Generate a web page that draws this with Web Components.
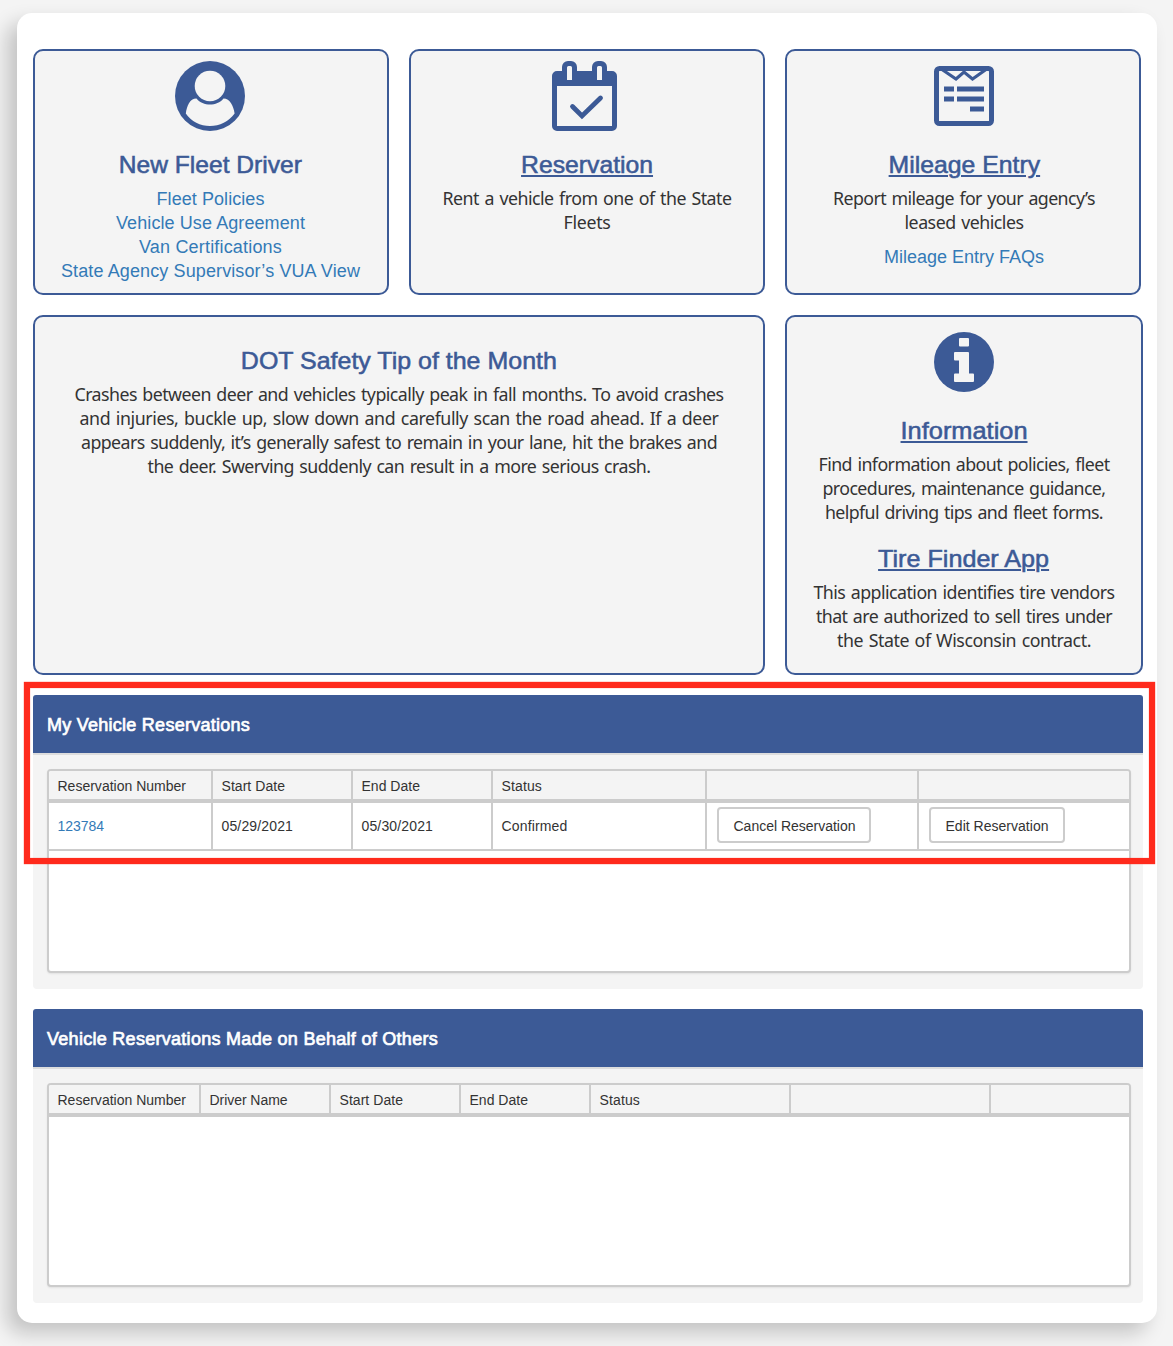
<!DOCTYPE html>
<html lang="en">
<head>
<meta charset="utf-8">
<title>Fleet Driver Portal</title>
<style>
html{background:#f4f4f4}
body{margin:0;padding:13px 16px 23px 17px;font-family:"Liberation Sans",sans-serif;color:#333}
</style>
</head>
<body>
<portal-page></portal-page>
<script>
const define = (name, html, setup) => {
  const t = document.createElement('template');
  t.innerHTML = html;
  customElements.define(name, class extends HTMLElement {
    connectedCallback() {
      if (this.shadowRoot) return;
      this.attachShadow({mode: 'open'}).append(t.content.cloneNode(true));
      if (setup) setup(this, this.shadowRoot);
    }
  });
};

/* One line of text that fills the given measure: tracked, or widened inside a card title. */
define('text-line', `<style>
:host{display:block;white-space:nowrap}
span{display:inline-block;text-decoration:var(--line,none);text-decoration-thickness:2px;text-underline-offset:2px}
</style><span><slot></slot></span>`, (el, root) => {
  const s = root.querySelector('span');
  const w = +el.getAttribute('w');
  const n = el.textContent.length;
  if (!w) return;
  const natural = s.getBoundingClientRect().width;
  if (el.closest('card-title')) {
    s.style.transform = `scaleX(${(w / natural).toFixed(4)})`;
  } else {
    s.style.letterSpacing = ((w - natural) / n).toFixed(3) + 'px';
  }
});

define('card-title', `<style>
:host{display:block;height:25px;padding-top:1px;line-height:26px;font-size:24px;color:#3c5a96;-webkit-text-stroke:.55px #3c5a96;text-align:center;margin-bottom:10px}
:host([linked]){--line:underline}
</style><slot></slot>`);

define('card-copy', `<style>
:host{display:block;margin:-1px 0 1px;line-height:24px;font-family:"Noto Sans",sans-serif;font-size:17.8px;word-spacing:1.4px;color:#333;text-align:center}
:host([links]){margin:0;font-family:"Liberation Sans",sans-serif;font-size:18px;word-spacing:0;color:#337ab7}
</style><slot></slot>`);

define('fleet-card', `<style>
:host{display:block;box-sizing:border-box;border:2px solid #3c5a96;border-radius:10px;background:#f4f4f4;padding-top:10px}
</style><slot name="icon"></slot><slot></slot>`);

const icons = {
  driver: `<circle cx="35" cy="35" r="35"/><circle cx="35" cy="25" r="15.3" fill="#f4f4f4"/><path fill="#f4f4f4" d="M21.500 37.600C28 45.600 42 45.600 48.500 37.600C55 37.600 58.500 45 59.600 52.500C54 60.500 44.500 65 35 65S16 60.500 10.800 52.500C12 45 14.500 37.600 21.500 37.600Z"/>`,
  calendar: `<path fill-rule="evenodd" d="M5 10H12V6A6 6 0 0 1 18 0H21A6 6 0 0 1 27 6V10H42V6A6 6 0 0 1 48 0H51A6 6 0 0 1 57 6V10H62A5 5 0 0 1 67 15V65A5 5 0 0 1 62 70H7A5 5 0 0 1 2 65V15A5 5 0 0 1 7 10ZM7 25V65H62V25ZM18.5 5A1.5 1.5 0 0 0 17 6.5V19H22V6.5A1.5 1.5 0 0 0 20.500 5ZM48.500 5A1.5 1.5 0 0 0 47 6.500V19H52V6.500A1.5 1.5 0 0 0 50.500 5Z"/><path d="M22.500 45.500L32 55L50.500 37" fill="none" stroke="#3c5a96" stroke-width="4.800" stroke-linecap="round"/>`,
  receipt: `<rect x="7.500" y="7.500" width="55" height="55" rx="3" fill="none" stroke="#3c5a96" stroke-width="5"/><path d="M13 8.500L27 18L35 11L43.500 18L57 8.500" fill="none" stroke="#3c5a96" stroke-width="3.200"/><path d="M15 25.500h10v5H15zM28 25.500h27v5H28zM15 35.500h10v5H15zM28 35.500h27v5H28zM41 45.500h14v5H41z"/>`,
  info: `<circle cx="35" cy="35" r="30"/><path fill="#f4f4f4" d="M31 11h8q1 0 1 1v6.500q0 1-1 1h-8q-1 0-1-1V12q0-1 1-1zM26 25h13q1 0 1 1v20.500h4q1 0 1 1V54q0 1-1 1H26q-1 0-1-1v-6.500q0-1 1-1h4V33.500h-4q-1 0-1-1V26q0-1 1-1z"/>`
};
define('card-icon', `<style>
:host{display:flex;justify-content:center;height:70px;margin-bottom:20px}
svg{display:block;width:70px;height:70px;fill:#3c5a96}
:host([name=calendar]) svg{margin-left:-4px}
:host([name=driver]) svg{margin-left:-1px}
</style><svg viewBox="0 0 70 70"></svg>`, (el, root) => {
  root.querySelector('svg').innerHTML = icons[el.getAttribute('name')];
});

define('row-button', `<style>
:host{display:block}
button{box-sizing:border-box;display:block;height:36px;border:2px solid #ccc;border-radius:4px;background:#fff;color:#333;font:14px/20px "Liberation Sans",sans-serif;padding:1px 0 0 14.500px;text-align:left;width:var(--w)}
</style><button><slot></slot></button>`, el => el.style.setProperty('--w', el.getAttribute('width') + 'px'));

define('grid-row', `<style>
:host{display:grid;grid-template-columns:var(--cols);height:46px;border-bottom:2px solid #ccc;font-size:14px;background:#fff}
:host([head]){height:28px;border-bottom-width:4px;background:#f4f4f4}
::slotted(div){box-sizing:border-box;display:flex;align-items:center;border-right:2px solid #ccc;padding-left:8.500px;padding-bottom:1px}
:host([head]) ::slotted(div){padding-top:1px;padding-bottom:0}
::slotted(div:last-child){border-right:0}
::slotted(.action){padding:0 0 2px 10px}
::slotted(.link){color:#337ab7}
</style><slot></slot>`);

define('data-grid', `<style>
:host{display:block;box-sizing:border-box;height:204px;border:2px solid #ccc;border-radius:4px;background:#fff;overflow:hidden;box-shadow:0 1px 2px rgba(0,0,0,.08)}
</style><slot></slot>`, el => el.style.setProperty('--cols', el.getAttribute('cols')));

define('data-panel', `<style>
:host{display:block;box-sizing:border-box;width:1110px;height:294px;background:#f4f4f4;border-radius:4px}
header{box-sizing:border-box;height:60px;background:#3c5a96;border-bottom:2px solid #ddd;border-radius:3px 3px 0 0;padding-left:14px;color:#fff;font-size:18px;line-height:60px;-webkit-text-stroke:.7px #fff}
section{padding:14px 12px 0 14px}
</style><header><slot name="title"></slot></header><section><slot></slot></section>`);

/* Outlined callout laid over the panel that it marks. */
define('focus-outline', `<style>
:host{display:block;position:relative}
i{position:absolute;left:-9px;top:-13px;width:1131px;height:182px;box-sizing:border-box;border:6px solid #ff2a1c;box-shadow:0 0 1px #ff2a1c,inset 0 0 1px #ff2a1c;pointer-events:none}
</style><slot></slot><i></i>`);

define('portal-page', `<style>
:host{display:flex;flex-direction:column;gap:20px;box-sizing:border-box;width:1140px;height:1310px;padding:36px 14px 20px 16px;background:#fff;border-radius:15px;box-shadow:-10px 10px 20px rgba(0,0,0,.2)}
.row{display:flex;gap:20px}
.a fleet-card{width:356px;height:246px}
.a .first{padding-right:1px}
.a .last{padding-left:2px}
.b fleet-card{height:360px}
.b .tip{width:732px;padding-top:30px}
.b .info{width:358px}
.gap{margin-top:11px}
.next{margin-top:21px}
</style>
<div class="row a">
 <fleet-card class="first"><card-icon slot="icon" name="driver"></card-icon>
  <card-title><text-line w="183">New Fleet Driver</text-line></card-title>
  <card-copy links><text-line w="108">Fleet Policies</text-line><text-line w="189">Vehicle Use Agreement</text-line><text-line w="143">Van Certifications</text-line><text-line w="299">State Agency Supervisor’s VUA View</text-line></card-copy>
 </fleet-card>
 <fleet-card><card-icon slot="icon" name="calendar"></card-icon>
  <card-title linked><text-line w="132">Reservation</text-line></card-title>
  <card-copy><text-line w="289">Rent a vehicle from one of the State</text-line><text-line w="47">Fleets</text-line></card-copy>
 </fleet-card>
 <fleet-card class="last"><card-icon slot="icon" name="receipt"></card-icon>
  <card-title linked><text-line w="151.500">Mileage Entry</text-line></card-title>
  <card-copy><text-line w="262">Report mileage for your agency’s</text-line><text-line w="119">leased vehicles</text-line></card-copy>
  <card-copy links class="gap"><text-line w="160">Mileage Entry FAQs</text-line></card-copy>
 </fleet-card>
</div>
<div class="row b">
 <fleet-card class="tip">
  <card-title><text-line w="316">DOT Safety Tip of the Month</text-line></card-title>
  <card-copy><text-line w="649">Crashes between deer and vehicles typically peak in fall months. To avoid crashes</text-line><text-line w="639">and injuries, buckle up, slow down and carefully scan the road ahead. If a deer</text-line><text-line w="636">appears suddenly, it’s generally safest to remain in your lane, hit the brakes and</text-line><text-line w="503">the deer. Swerving suddenly can result in a more serious crash.</text-line></card-copy>
 </fleet-card>
 <fleet-card class="info"><card-icon slot="icon" name="info"></card-icon>
  <card-title linked><text-line w="127">Information</text-line></card-title>
  <card-copy><text-line w="291">Find information about policies, fleet</text-line><text-line w="283">procedures, maintenance guidance,</text-line><text-line w="278">helpful driving tips and fleet forms.</text-line></card-copy>
  <card-title linked class="next"><text-line w="171">Tire Finder App</text-line></card-title>
  <card-copy><text-line w="301">This application identifies tire vendors</text-line><text-line w="296">that are authorized to sell tires under</text-line><text-line w="254">the State of Wisconsin contract.</text-line></card-copy>
 </fleet-card>
</div>
<focus-outline><data-panel>
 <text-line slot="title" w="203">My Vehicle Reservations</text-line>
 <data-grid cols="164px 140px 140px 214px 212px 1fr">
  <grid-row head><div><text-line w="128.500">Reservation Number</text-line></div><div><text-line w="63.500">Start Date</text-line></div><div><text-line w="58.500">End Date</text-line></div><div><text-line w="40.500">Status</text-line></div><div></div><div></div></grid-row>
  <grid-row><div class="link"><text-line w="46.500">123784</text-line></div><div><text-line w="71.500">05/29/2021</text-line></div><div><text-line w="71.500">05/30/2021</text-line></div><div><text-line w="66">Confirmed</text-line></div><div class="action"><row-button width="154"><text-line w="122">Cancel Reservation</text-line></row-button></div><div class="action"><row-button width="136"><text-line w="103">Edit Reservation</text-line></row-button></div></grid-row>
 </data-grid>
</data-panel></focus-outline>
<data-panel>
 <text-line slot="title" w="391">Vehicle Reservations Made on Behalf of Others</text-line>
 <data-grid cols="152px 130px 130px 130px 200px 200px 1fr">
  <grid-row head><div><text-line w="128.500">Reservation Number</text-line></div><div><text-line w="78">Driver Name</text-line></div><div><text-line w="63.500">Start Date</text-line></div><div><text-line w="58.500">End Date</text-line></div><div><text-line w="40.500">Status</text-line></div><div></div><div></div></grid-row>
 </data-grid>
</data-panel>`);
</script>
</body>
</html>
